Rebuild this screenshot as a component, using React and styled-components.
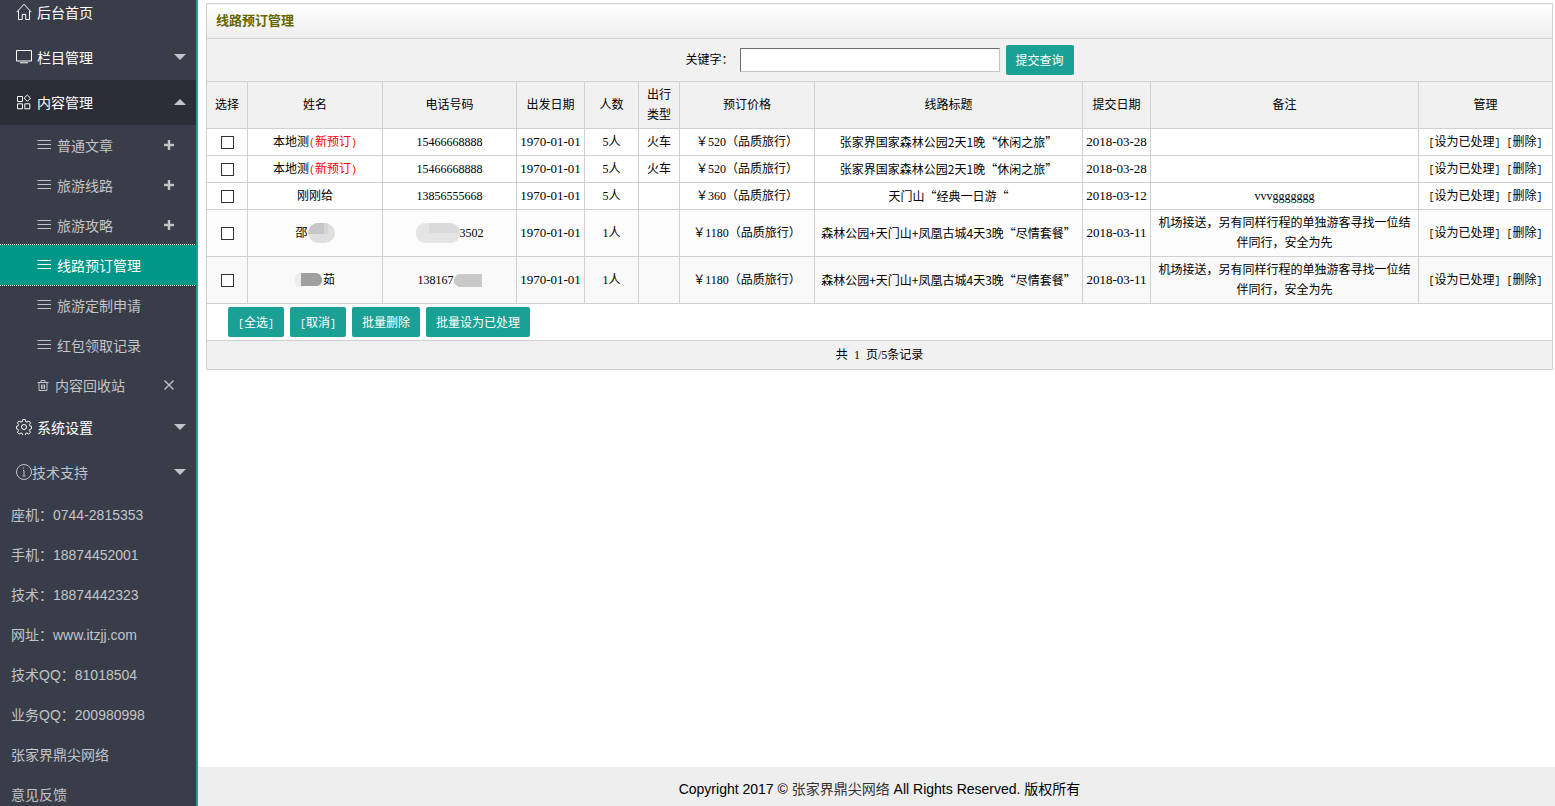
import React from "react";
import styled, { createGlobalStyle, css } from "styled-components";

const palette = {
  side: "#393d49",
  sideOpen: "#2b2e37",
  active: "#009688",
  button: "#1aa094",
  line: "#cfd1d2",
  sub: "#c2c4c8"
};

const cjk = `"Noto Sans CJK SC", sans-serif`;

const bookings = [
  { name: "本地测", fresh: true, phone: "15466668888", people: 5, type: "火车", price: 520, title: "张家界国家森林公园2天1晚“休闲之旅”", date: "2018-03-28" },
  { name: "本地测", fresh: true, phone: "15466668888", people: 5, type: "火车", price: 520, title: "张家界国家森林公园2天1晚“休闲之旅”", date: "2018-03-28" },
  { name: "刚刚给", phone: "13856555668", people: 5, price: 360, title: "天门山“经典一日游“", date: "2018-03-12", note: "vvvggggggg" },
  {
    name: <>邵<NameMaskRight /></>,
    phone: <><PhoneMaskLeft />3502</>,
    people: 1,
    price: 1180,
    title: "森林公园+天门山+凤凰古城4天3晚“尽情套餐”",
    date: "2018-03-11",
    note: "机场接送，另有同样行程的单独游客寻找一位结伴同行，安全为先",
    shade: "#fcfcfc"
  },
  {
    name: <><NameMaskLeft />茹</>,
    phone: <>138167<PhoneMaskRight /></>,
    people: 1,
    price: 1180,
    title: "森林公园+天门山+凤凰古城4天3晚“尽情套餐”",
    date: "2018-03-11",
    note: "机场接送，另有同样行程的单独游客寻找一位结伴同行，安全为先",
    shade: "#f9f9f9"
  }
];

// widths are shares, the table stretches them to its own width
const columns = [
  ["选择", 41],
  ["姓名", 135],
  ["电话号码", 134],
  ["出发日期", 68],
  ["人数", 54],
  ["出行类型", 41],
  ["预订价格", 135],
  ["线路标题", 268],
  ["提交日期", 68],
  ["备注", 268],
  ["管理", 134]
];

const articles = [
  { text: "普通文章", add: true },
  { text: "旅游线路", add: true },
  { text: "旅游攻略", add: true },
  { text: "线路预订管理", active: true },
  { text: "旅游定制申请" },
  { text: "红包领取记录" }
];

const contacts = [
  "座机：0744-2815353",
  "手机：18874452001",
  "技术：18874442323",
  "网址：www.itzjj.com",
  "技术QQ：81018504",
  "业务QQ：200980998",
  "张家界鼎尖网络",
  "意见反馈"
];

function App() {
  return (
    <Page>
      <GlobalStyle />
      <Sidebar />
      <Main>
        <BookingTable />
        <Footer>
          Copyright 2017 © <a href="#company">张家界鼎尖网络</a> All Rights Reserved. 版权所有
        </Footer>
      </Main>
    </Page>
  );
}

function Sidebar() {
  return (
    <Side>
      <MenuItem href="#home" $first>
        <HomeIcon />
        后台首页
      </MenuItem>
      <MenuItem href="#columns">
        <ScreenIcon />
        栏目管理
        <Caret />
      </MenuItem>
      <MenuItem href="#content" $open>
        <BlocksIcon />
        内容管理
        <Caret up />
      </MenuItem>
      {articles.map(({ text, add, active }) => (
        <SubItem href="#list" key={text} $active={active}>
          <LinesIcon />
          {text}
          {add && <PlusIcon />}
        </SubItem>
      ))}
      <SubItem href="#trash">
        <TrashIcon />
        内容回收站
        <CrossIcon />
      </SubItem>
      <MenuItem href="#settings">
        <GearIcon />
        系统设置
        <Caret />
      </MenuItem>
      <MenuItem href="#support" $muted>
        <InfoIcon />
        技术支持
        <Caret />
      </MenuItem>
      {contacts.map(text => (
        <Contact href="#contact" key={text}>
          {text}
        </Contact>
      ))}
    </Side>
  );
}

function BookingTable() {
  return (
    <Table>
      <colgroup>
        {columns.map(([label, width]) => (
          <Col key={label} $width={width} />
        ))}
      </colgroup>
      <thead>
        <tr>
          <TitleCell colSpan={11}>线路预订管理</TitleCell>
        </tr>
        <tr>
          <BarCell colSpan={11}>
            <SearchForm onSubmit={e => e.preventDefault()}>
              <label htmlFor="keyword">关键字：</label>
              <Keyword id="keyword" type="text" />
              <Button type="submit">提交查询</Button>
            </SearchForm>
          </BarCell>
        </tr>
        <tr>
          {columns.map(([label]) => (
            <HeadCell key={label}>{label}</HeadCell>
          ))}
        </tr>
      </thead>
      <tbody>
        {bookings.map((item, index) => (
          <Row key={index} $shade={item.shade}>
            <Cell>
              <Check type="checkbox" aria-label="选择" />
            </Cell>
            <Cell>
              <Masked>
                {item.name}
                {item.fresh && (
                  <Fresh>
                    <Half>(</Half>新预订<Half>)</Half>
                  </Fresh>
                )}
              </Masked>
            </Cell>
            <Cell>
              <Masked>{item.phone}</Masked>
            </Cell>
            <DateCell>1970-01-01</DateCell>
            <Cell>{item.people}人</Cell>
            <Cell>{item.type}</Cell>
            <Cell>￥{item.price}（品质旅行）</Cell>
            <TextCell>{item.title}</TextCell>
            <DateCell>{item.date}</DateCell>
            <Cell>{item.note}</Cell>
            <Cell>
              <Actions>
                <a href="#done">
                  <Half>[</Half>设为已处理<Half>]</Half>
                </a>
                <a href="#delete">
                  <Half>[</Half>删除<Half>]</Half>
                </a>
              </Actions>
            </Cell>
          </Row>
        ))}
      </tbody>
      <tfoot>
        <tr>
          <BatchCell colSpan={11}>
            <Batch>
              <Button type="button">
                <Half>[</Half>全选<Half>]</Half>
              </Button>
              <Button type="button">
                <Half>[</Half>取消<Half>]</Half>
              </Button>
              <Button type="button">批量删除</Button>
              <Button type="button">批量设为已处理</Button>
            </Batch>
          </BatchCell>
        </tr>
        <tr>
          <PagerCell colSpan={11}>
            共<Count>1</Count>页/5条记录
          </PagerCell>
        </tr>
      </tfoot>
    </Table>
  );
}

/* menu icons */

function HomeIcon() {
  return (
    <Icon width="16" height="18" viewBox="0 0 16 18">
      <path d="M0.7 9.2 8 1.2l7.3 8M2.5 7.8v8.7h3.8v-5.2h3.4v5.2h3.8V7.8" />
    </Icon>
  );
}

function ScreenIcon() {
  return (
    <Icon width="16" height="14" viewBox="0 0 16 14">
      <path d="M0.5 0.5h15v10.5h-15zM4 12.8h8" />
    </Icon>
  );
}

function BlocksIcon() {
  return (
    <Icon width="16" height="16" viewBox="0 0 16 16">
      <path d="M1.5 2.5h5v5h-5zM1.5 9.8h5v5h-5zM8.8 9.8h5v5h-5zM11.3 1l3.2 3.2-3.2 3.2-3.2-3.2z" />
    </Icon>
  );
}

function LinesIcon() {
  return (
    <Icon width="15" height="10" viewBox="0 0 15 10">
      <path d="M0.5 0.5h13.500M0.500 4.500h13.500M0.500 8.500h13.500" />
    </Icon>
  );
}

function TrashIcon() {
  return (
    <Icon width="13" height="11" viewBox="0 0 13 11">
      <path d="M0.5 2.5h11M4 2V0.5h4V2M2 3v7.5h8V3M4.5 4.5V9M6 4.5V9M7.5 4.5V9" />
    </Icon>
  );
}

function GearIcon() {
  return (
    <Icon width="16" height="16" viewBox="0 0 16 16">
      <circle cx="8" cy="8" r="2.5" />
      <path d="M6.7 0.6h2.6l0.4 2 1.3 0.6 1.8-1.2 1.8 1.9-1.2 1.7 0.5 1.3 1.6 0.4v2.5l-1.6 0.4-0.6 1.4 1.2 1.7-1.8 1.8-1.7-1.2-1.4 0.6-0.3 1.9H6.7l-0.4-1.9-1.3-0.6-1.8 1.2-1.8-1.8 1.2-1.7-0.6-1.4-1.5-0.4V7.3l1.5-0.4 0.6-1.4-1.2-1.7 1.8-1.8L5 3.2l1.3-0.6z" />
    </Icon>
  );
}

function InfoIcon() {
  return (
    <Icon width="16" height="16" viewBox="0 0 16 16">
      <circle cx="8" cy="8" r="7.5" />
      <path d="M7 6.5h1v5.3M6.5 12h3M7.5 3.5v1.2" />
    </Icon>
  );
}

function PlusIcon() {
  return (
    <EndIcon width="10" height="10" viewBox="0 0 10 10" strokeWidth="2.4">
      <path d="M0 5h10M5 0v10" />
    </EndIcon>
  );
}

function CrossIcon() {
  return (
    <EndIcon width="10" height="10" viewBox="0 0 10 10" strokeWidth="1.4">
      <path d="M0.5 0.5l9 9M9.5 0.5l-9 9" />
    </EndIcon>
  );
}

function Caret({ up }) {
  return (
    <CaretIcon width="12" height="6" viewBox="0 0 12 6">
      <path d={up ? "M0 6h12L6 0z" : "M0 0h12L6 6z"} />
    </CaretIcon>
  );
}

/* blurred patches over private data */

function NameMaskRight() {
  return (
    <svg width="27" height="20" viewBox="0 0 27 20">
      <clipPath id="nameRight">
        <rect width="27" height="20" rx="10" />
      </clipPath>
      <g clipPath="url(#nameRight)">
        <path fill="#dfdfdf" d="M0 0h27v20H0z" />
        <path fill="#c6c6c6" d="M0 0h16v11H0z" />
        <path fill="#d4d4d4" d="M16 0h4v11h-4z" />
      </g>
    </svg>
  );
}

function NameMaskLeft() {
  return (
    <svg width="28" height="14" viewBox="0 0 28 14">
      <rect width="14" height="14" rx="6" fill="#ececec" />
      <path fill="#9f9f9f" d="M6 0h16q5 2 5 7t-5 6H6z" />
    </svg>
  );
}

function PhoneMaskLeft() {
  return (
    <svg width="44" height="20" viewBox="0 0 44 20">
      <rect width="44" height="20" rx="9" fill="#e4e4e4" />
      <path fill="#dadada" d="M13 0h22q8 3 8 10H13z" />
    </svg>
  );
}

function PhoneMaskRight() {
  return (
    <svg width="28" height="13" viewBox="0 0 28 13">
      <path fill="#c9c9c9" d="M5 0h23v13H5Q0 11 0 6.500T5 0z" />
    </svg>
  );
}

const GlobalStyle = createGlobalStyle`
  * {
    box-sizing: border-box;
  }
  body {
    margin: 0;
    background: #fff;
    color: #000;
    font-family: "Liberation Sans", ${cjk};
    font-size: 14px;
  }
  a {
    color: inherit;
    text-decoration: none;
  }
`;

const Page = styled.div`
  display: flex;
  height: 100vh;
`;

const Side = styled.nav`
  flex: 0 0 198px;
  overflow: hidden;
  background: ${palette.side};
  border-right: 2px solid ${palette.button};
`;

const Main = styled.main`
  flex: 1;
  min-width: 0;
  display: flex;
  flex-direction: column;
  justify-content: space-between;
`;

const MenuItem = styled.a`
  display: flex;
  align-items: center;
  gap: ${props => (props.$muted ? 0 : 5)}px;
  height: 45px;
  padding: 0 10px 2px 16px;
  && {
    color: ${props => (props.$muted ? palette.sub : "#fff")};
  }
  ${props =>
    props.$first &&
    css`
      height: 35px;
      padding-bottom: 12px;
    `}
  ${props =>
    props.$open &&
    css`
      background: ${palette.sideOpen};
    `}
`;

const SubItem = styled.a`
  display: flex;
  align-items: center;
  gap: 5px;
  height: 40px;
  padding: 0 22px 0 37px;
  && {
    color: ${palette.sub};
  }
  ${props =>
    props.$active &&
    css`
      background: ${palette.active};
      outline: 1px dotted #fff;
      && {
        color: #fff;
      }
    `}
`;

const Contact = styled.a`
  display: block;
  padding-left: 11px;
  line-height: 40px;
  && {
    color: ${palette.sub};
  }
`;

const Icon = styled.svg`
  flex: none;
  fill: none;
  stroke: currentColor;
`;

const EndIcon = styled(Icon)`
  margin-left: auto;
`;

const CaretIcon = styled.svg`
  margin-left: auto;
  fill: ${palette.sub};
`;

const Table = styled.table`
  width: calc(100% - 10px);
  margin: 3px 2px 0 8px;
  border-collapse: collapse;
  table-layout: fixed;
  font-family: "Liberation Serif", ${cjk};
  font-size: 12px;
  line-height: 20px;
  text-align: center;
`;

const Col = styled.col`
  width: ${props => props.$width}px;
`;

const Cell = styled.td`
  padding: 3px 6px;
  border: 1px solid ${palette.line};
`;

const HeadCell = styled.th`
  padding: 3px 6px;
  border: 1px solid ${palette.line};
  background: #f1f1f1;
  font-weight: normal;
`;

/* a size up, as the serif hyphen is narrow */
const DateCell = styled(Cell)`
  padding: 3px 0;
  font-size: 13px;
`;

const TextCell = styled(Cell)`
  padding: 3px;
  font-family: ${cjk};
`;

const TitleCell = styled(HeadCell)`
  padding: 7px 9px;
  background: linear-gradient(#fff, #ededed);
  color: #666600;
  font-size: 13px;
  font-weight: bold;
  text-align: left;
`;

const BarCell = styled(HeadCell)`
  padding: 6px;
`;

const BatchCell = styled(Cell)`
  padding: 3px 21px;
`;

const PagerCell = styled(Cell)`
  padding: 4px;
  background: #f1f1f1;
`;

const Row = styled.tr`
  background: ${props => props.$shade || "#fff"};
`;

const SearchForm = styled.form`
  display: flex;
  align-items: center;
  justify-content: center;
  gap: 6px;
`;

const Keyword = styled.input`
  width: 260px;
  height: 24px;
  padding: 0 4px;
  border: 1px solid #c4c4c4;
  border-top-color: #6d6d6d;
  border-left-color: #6d6d6d;
  background: #fff;
`;

const Button = styled.button`
  height: 30px;
  padding: 0 10px 2px;
  border: 0;
  border-radius: 2px;
  background: ${palette.button};
  color: #fff;
  font: 12px ${cjk};
`;

const Check = styled.input`
  display: block;
  appearance: none;
  width: 13px;
  height: 13px;
  margin: 0 auto;
  border: 1px solid #333;
  background: #fff;
`;

const Masked = styled.span`
  display: flex;
  align-items: center;
  justify-content: center;
  height: 20px;
`;

const Fresh = styled.span`
  color: #f00;
`;

/* half-width punctuation */
const Half = styled.span`
  font-family: "Liberation Mono", monospace;
  font-size: 10px;
  line-height: 1;
`;

const Actions = styled.span`
  display: flex;
  justify-content: center;
  gap: 6px;
  white-space: nowrap;
`;

const Batch = styled.div`
  display: flex;
  gap: 6px;
`;

const Count = styled.span`
  margin: 0 6px;
`;

const Footer = styled.footer`
  padding: 12px 0 7px 6px;
  background: #eee;
  line-height: 20px;
  text-align: center;
  a {
    color: #333;
  }
`;

export default App;
